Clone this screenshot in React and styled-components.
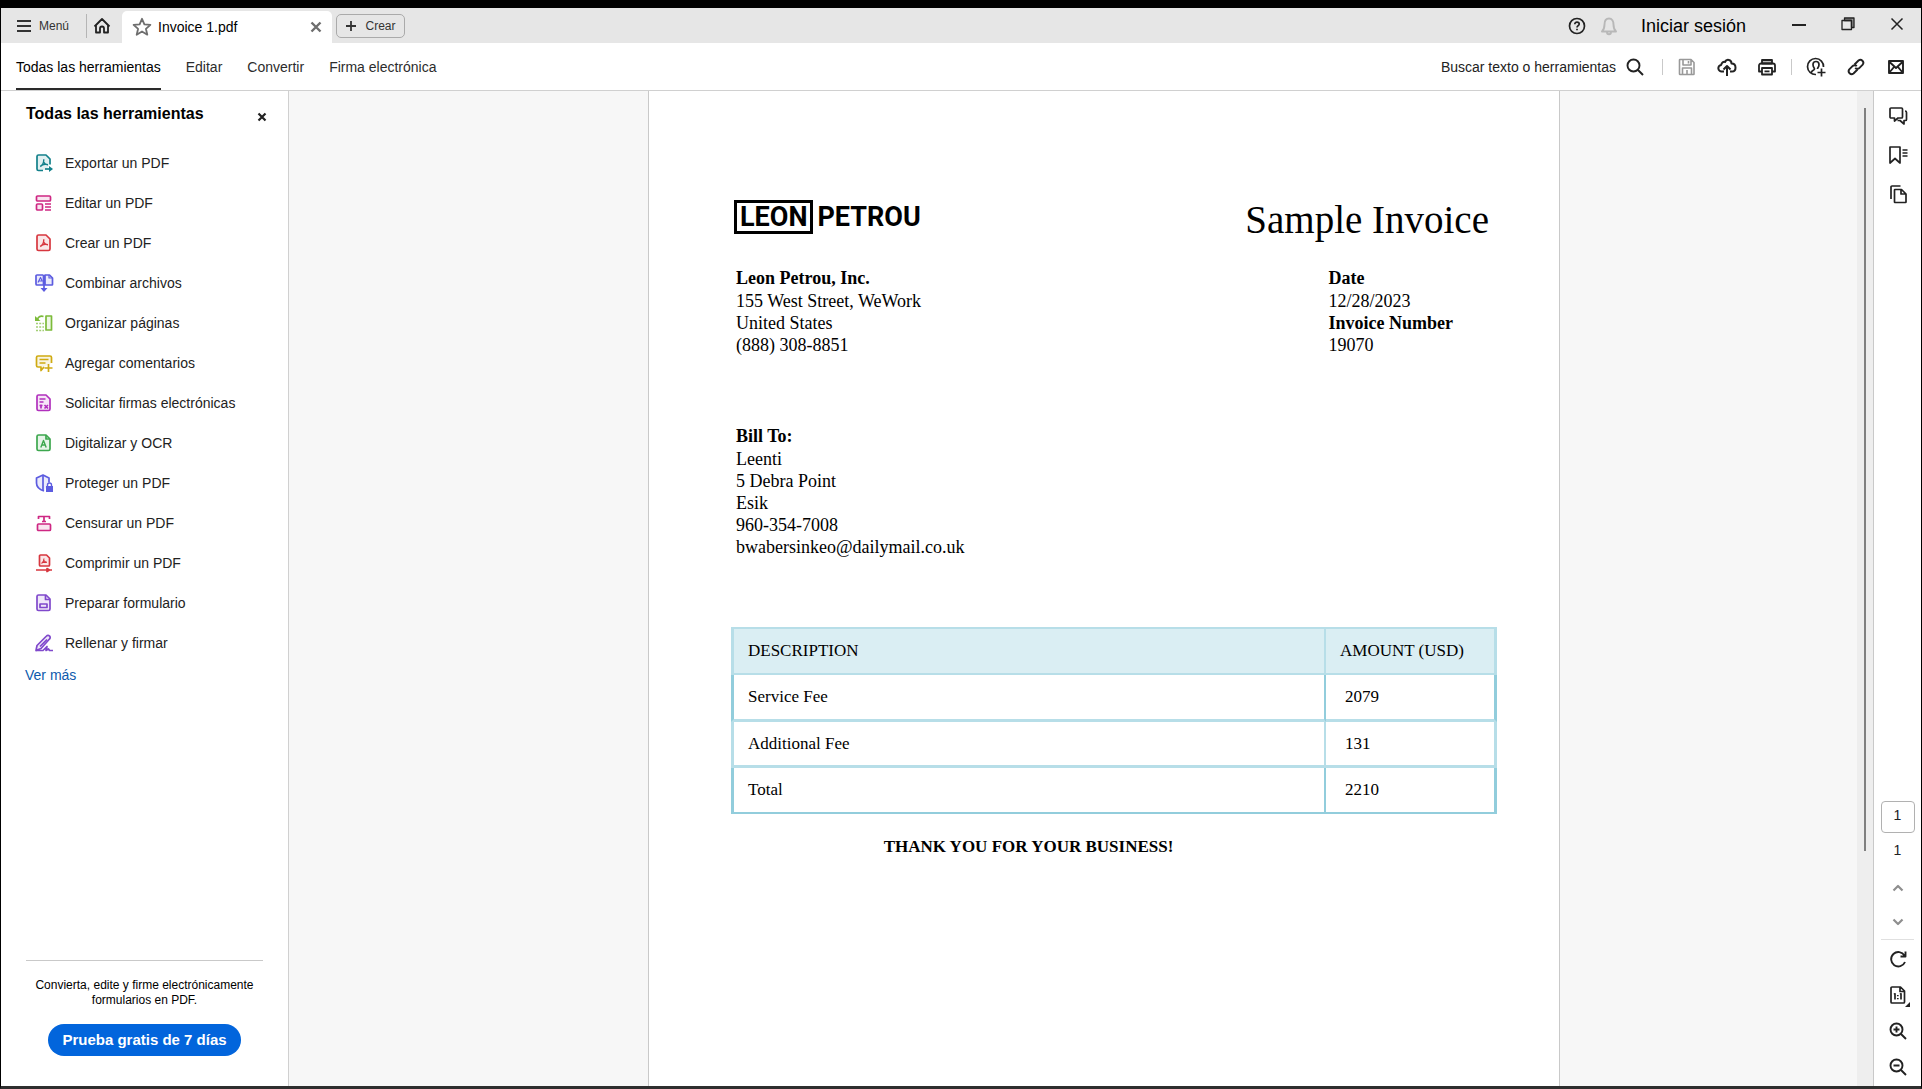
import React from "react";
import styled, { createGlobalStyle } from "styled-components";

const GlobalStyle = createGlobalStyle`
  *, *::before, *::after { box-sizing: border-box; }
  body { margin: 0; background: #000; }
  button, input { font: inherit; color: inherit; }
  h1, h2, h3, p, ul, address { margin: 0; padding: 0; font-style: normal; }
`;

const Shell = styled.div`
  display: grid;
  grid-template-rows: auto auto minmax(0, 1fr);
  height: 100vh;
  border-top: 8px solid #000;
  border-left: 1px solid #000;
  border-right: 1px solid #000;
  border-bottom: 3px solid #2e2e2e;
  background: #fff;
  color: #222;
  font: 14px/20px "Liberation Sans", Arial, sans-serif;
`;

const Svg = styled.svg`
  display: block;
  flex: none;
  fill: none;
  stroke: currentColor;
  stroke-width: ${(p) => p.$weight || 1.6};
  stroke-linejoin: round;
  overflow: visible;
`;

function Icon({ w = 20, h = w, weight, children }) {
  return (
    <Svg width={w} height={h} viewBox={`0 0 ${w} ${h}`} $weight={weight} aria-hidden="true">
      {children}
    </Svg>
  );
}

const Plain = styled.button`
  display: flex;
  align-items: center;
  justify-content: center;
  padding: 0;
  border: 0;
  background: none;
  cursor: pointer;
`;

/* Title bar */
const TitleBar = styled.header`
  display: flex;
  align-items: center;
  height: 35px;
  background: #e6e6e6;
`;

const MenuButton = styled(Plain)`
  gap: 8px;
  margin-left: 16px;
  padding-right: 17px;
  font-size: 12px;
  color: #333;
`;

const HomeButton = styled(Plain)`
  height: 24px;
  width: 36px;
  padding-right: 6px;
  border-left: 1px solid #b5b5b5;
  color: #222;
`;

const Tab = styled.div`
  display: flex;
  align-items: center;
  align-self: flex-end;
  gap: 6px;
  width: 210px;
  height: 32px;
  padding: 0 10px;
  border-radius: 5px 5px 0 0;
  background: #fff;
  color: #000;
`;

const TabName = styled.span`
  flex: 1;
`;

const Muted = styled(Plain)`
  color: #6e6e6e;
`;

const CreateButton = styled(Plain)`
  gap: 10px;
  width: 69px;
  height: 24px;
  margin-left: 4px;
  border: 1px solid #aaa;
  border-radius: 5px;
  font-size: 12px;
  color: #333;
`;

const TitleActions = styled.div`
  display: flex;
  align-items: center;
  gap: 12px;
  margin-left: auto;
`;

const SignIn = styled(Plain)`
  margin-left: 10px;
  font-size: 18px;
  color: #000;
`;

const WindowButtons = styled.div`
  display: flex;
  gap: 29px;
  margin: 0 14px 4px 43px;
`;

/* Toolbar */
const Toolbar = styled.div`
  display: flex;
  align-items: stretch;
  height: 48px;
  padding: 0 15px;
  border-bottom: 1px solid #d0d0d0;
`;

const Nav = styled.nav`
  display: flex;
  gap: 25px;
`;

const NavLink = styled.a`
  display: flex;
  align-items: center;
  padding-top: ${(p) => (p.$active ? "2px" : "0")};
  border-bottom: ${(p) => (p.$active ? "2px solid #2a2a2a" : "0")};
  color: ${(p) => (p.$active ? "#000" : "#2c2c2c")};
  text-decoration: none;
`;

const Tools = styled.div`
  display: flex;
  align-items: center;
  gap: 20px;
  margin-left: auto;
`;

const SearchButton = styled(Plain)`
  gap: 9px;
  margin-right: 3px;
  color: #222;
`;

const Tool = styled(Plain)`
  width: 20px;
  height: 20px;
  color: ${(p) => p.$color || "#222"};
`;

const Separator = styled.span`
  width: 1px;
  height: 16px;
  margin: 0 -6px;
  background: #c9c9c9;
`;

/* Workspace */
const Workspace = styled.div`
  display: grid;
  grid-template-columns: 288px minmax(0, 1fr) 17px 47px;
  min-height: 0;
`;

const Sidebar = styled.aside`
  display: flex;
  flex-direction: column;
  border-right: 1px solid #d0d0d0;
`;

const SidebarHead = styled.div`
  display: flex;
  justify-content: space-between;
  height: 52px;
  padding: 13px 21px 0 25px;
`;

const SidebarTitle = styled.h2`
  font-size: 16px;
  line-height: 20px;
  color: #000;
`;

const SidebarClose = styled(Plain)`
  height: 26px;
`;

const ToolList = styled.ul`
  list-style: none;
`;

const ToolItem = styled(Plain)`
  justify-content: flex-start;
  gap: 12px;
  width: 100%;
  height: 40px;
  padding-left: 34px;
`;

const ToolIcon = styled.span`
  color: ${(p) => p.$color};
`;

const More = styled.a`
  align-self: flex-start;
  margin: 2px 0 0 24px;
  color: #0d5aac;
  text-decoration: none;
`;

const Promo = styled.div`
  display: flex;
  flex-direction: column;
  align-items: center;
  gap: 16px;
  margin: auto 25px 30px;
  padding-top: 17px;
  border-top: 1px solid #c9c9c9;
`;

const PromoText = styled.p`
  font-size: 12px;
  line-height: 15px;
  text-align: center;
  color: #000;
`;

const TrialButton = styled(Plain)`
  width: 193px;
  height: 32px;
  border-radius: 16px;
  background: #0265dc;
  font-size: 15px;
  font-weight: 700;
  color: #fff;
`;

const Viewer = styled.main`
  display: flex;
  background: #f7f7f7;
  overflow: hidden;

  &::before { content: ""; flex: 359; }
  &::after { content: ""; flex: 297; }
`;

const ScrollTrack = styled.div`
  display: flex;
  justify-content: center;
  padding-top: 17px;
  border-right: 1px solid #c9c9c9;
  background: #eee;
`;

const ScrollThumb = styled.div`
  width: 2px;
  height: 76%;
  background: #808080;
`;

const Rail = styled.aside`
  display: flex;
  flex-direction: column;
  align-items: center;
  padding: 15px 0 9px;
`;

const RailGroup = styled.div`
  display: flex;
  flex-direction: column;
  align-items: center;
  gap: ${(p) => p.$gap}px;
`;

const PageBox = styled.input`
  width: 34px;
  height: 32px;
  margin: auto 0 7px;
  padding: 0 0 4px;
  border: 1px solid #b1b1b1;
  border-radius: 4px;
  background: #fff;
  text-align: center;
`;

const PageCount = styled.span`
  margin-bottom: 18px;
`;

const RailRule = styled.hr`
  width: 33px;
  margin: 7px 0 9px;
  border: 0;
  border-top: 1px solid #e0e0e0;
`;

/* Invoice document */
const Paper = styled.article`
  flex: none;
  width: 912px;
  padding: 109px 62px 0 82px;
  border: solid #c9c9c9;
  border-width: 0 1px;
  background: #fff;
  color: #000;
  font: 18px/22px "Liberation Serif", "Times New Roman", serif;
`;

const PaperTop = styled.div`
  display: flex;
  justify-content: space-between;
  height: 67px;
  padding: 0 8px 0 3px;
`;

const Logo = styled.div`
  display: flex;
  align-items: center;
  gap: 4px;
  height: 34px;
  font: 700 27px/28px Roboto, sans-serif;
`;

const LogoBox = styled.span`
  height: 34px;
  padding: 0 3px;
  border: 3px solid #000;
`;

const PaperTitle = styled.h1`
  font-size: 39px;
  line-height: 40px;
  font-weight: 400;
`;

const PaperRow = styled.div`
  display: flex;
  justify-content: space-between;
  padding: 0 44px 0 5px;
`;

const BillTo = styled.address`
  padding: 69px 0 69px 5px;
`;

const Strong = styled.h3`
  margin-bottom: ${(p) => (p.$tight ? "0" : "1px")};
  font-size: 18px;
  line-height: 22px;
`;

const LIGHT = "#b7dee8";
const DARK = "#92cddc";

const Table = styled.table`
  width: 100%;
  border-collapse: separate;
  border-spacing: 0;
  table-layout: fixed;
  font-size: 17px;
  text-align: left;
`;

const Row = styled.tr`
  height: ${(p) => p.$h}px;
  --side: ${(p) => p.$side};
  --rule: ${(p) => p.$rule};
`;

const Head = styled.th`
  width: ${(p) => p.$w || "auto"};
  padding: 0 0 0 ${(p) => p.$pad}px;
  border: solid ${LIGHT};
  border-width: 2px ${(p) => (p.$last ? 3 : 2)}px 2px ${(p) => (p.$last ? 0 : 3)}px;
  background: #daeef3;
  font-weight: 400;
`;

const Cell = styled.td`
  padding: 0 0 0 ${(p) => p.$pad}px;
  border: solid var(--side);
  border-width: 0 ${(p) => (p.$last ? 3 : 2)}px ${(p) => p.$b}px ${(p) => (p.$last ? 0 : 3)}px;
  border-bottom-color: var(--rule);
`;

const Thanks = styled.p`
  padding: 22px 171px 0 0;
  font-size: 17px;
  font-weight: 700;
  text-align: center;
`;

const acrobat = (
  <path d="M5.200 12.500c2-.9 3.600-3.200 3.600-7.200M8.800 8.300c.8 1.800 2.200 2.500 4.200 2.500M7 11.200c1.600-.8 3.200-1 5.500-.6" strokeWidth="1.400" />
);

const tint = { fill: "currentColor", fillOpacity: 0.12 };

const tools = [
  ["Exportar un PDF", "#12808a", <>
    <path {...tint} stroke="none" d="M2 2h12v10l-3 4H2z" />
    <path d="M8 16.500H3.500a1.500 1.500 0 0 1-1.500-1.500V2.500A1.500 1.500 0 0 1 3.500 1H11l4 4v5.500" />
    {acrobat}
    <path d="M10 15h6" />
    <path d="M14 12l4 3-4 3z" fill="currentColor" stroke="none" />
  </>],
  ["Editar un PDF", "#ce2783", <>
    <rect {...tint} x="1.500" y="2" width="14" height="5" rx="1" />
    <rect {...tint} x="1.500" y="10" width="6" height="6" rx="1" />
    <path d="M10 10h6M10 13h6M10 16h6" />
  </>],
  ["Crear un PDF", "#d7373f", <>
    <path {...tint} d="M3.500 1H11l4 4v10a1.500 1.500 0 0 1-1.500 1.500h-10A1.500 1.500 0 0 1 2 15V2.500A1.500 1.500 0 0 1 3.500 1z" />
    {acrobat}
  </>],
  ["Combinar archivos", "#5c5ce0", <>
    <path {...tint} d="M8.500 1H2a1 1 0 0 0-1 1v8a1 1 0 0 0 1 1h15a.5.5 0 0 0 .5-.5V4L14.500 1H10v10M8.500 1v10" />
    <path d="M3 8.500l2.500-5 2 4M3.500 7h4M14 1v3h3" strokeWidth="1.200" />
    <path d="M9 11v4" />
    <path d="M5.500 14h7L9 18z" fill="currentColor" stroke="none" />
  </>],
  ["Organizar páginas", "#7cbb3a", <>
    <rect {...tint} x="11" y="2" width="5.500" height="14" />
    <path d="M2.500 6c0-3 3-4.500 6-3.500" />
    <path d="M0 2v5h5.500z" fill="currentColor" stroke="none" />
    <path d="M1 9.500h8M1 13h8M1 16.500h8" strokeDasharray="2 1.200" opacity=".7" />
  </>],
  ["Agregar comentarios", "#cfaa12", <>
    <path {...tint} d="M9 13l-3 3.500V13H3a1.500 1.500 0 0 1-1.500-1.500v-8A1.500 1.500 0 0 1 3 2h12a1.500 1.500 0 0 1 1.500 1.500V9" />
    <path d="M4.500 5.500h9M4.500 9h6M13.500 10v8M9.500 14h8" />
  </>],
  ["Solicitar firmas electrónicas", "#b130bd", <>
    <path {...tint} d="M3.500 1H11l4 4v10a1.500 1.500 0 0 1-1.500 1.500h-10A1.500 1.500 0 0 1 2 15V2.500A1.500 1.500 0 0 1 3.500 1z" />
    <path d="M4.500 5h6M4.500 8h4M4.500 11.500h3M6 10.500v4M9.500 11l3.500 3.500M13 11l-3.500 3.500" />
  </>],
  ["Digitalizar y OCR", "#3da74e", <>
    <path {...tint} d="M3.500 1H11l4 4v10a1.500 1.500 0 0 1-1.500 1.500h-10A1.500 1.500 0 0 1 2 15V2.500A1.500 1.500 0 0 1 3.500 1z" />
    <path d="M11 1v4h4" />
    <path d="M5.800 13.500l2.700-7 2.700 7M6.800 11h3.500" strokeWidth="1.400" />
  </>],
  ["Proteger un PDF", "#5c5ce0", <>
    <path {...tint} d="M9 17c-5-1.500-7.500-4-7.500-8V4L8 1l6 3v4.500" />
    <path d="M8 1v16" />
    <path d="M12.500 12v-1a2 2 0 0 1 4 0v1" strokeWidth="1.400" />
    <rect x="11" y="12" width="7" height="6" fill="currentColor" stroke="none" />
  </>],
  ["Censurar un PDF", "#ce2783", <>
    <rect {...tint} x="2.500" y="10" width="13" height="6.500" rx="1" />
    <path d="M3.500 5V2.500h11V5M9 2.500v5M7 7.500h4" />
  </>],
  ["Comprimir un PDF", "#d7373f", <>
    <path {...tint} d="M5.500 1h6L14.500 4v7a1 1 0 0 1-1 1h-8a1 1 0 0 1-1-1V2a1 1 0 0 1 1-1z" />
    <path d="M6.500 9.500C8 8.500 9 6.500 9 4.500M9 6.500c.5 1.200 1.500 1.800 3 1.800M7.500 8.500h4" strokeWidth="1.100" />
    <path d="M1 16h16M12 14.500l2.500 1.500-2.500 1.500z" />
  </>],
  ["Preparar formulario", "#8049cc", <>
    <path {...tint} d="M3.500 1H11l4 4v10a1.500 1.500 0 0 1-1.500 1.500h-10A1.500 1.500 0 0 1 2 15V2.500A1.500 1.500 0 0 1 3.500 1z" />
    <path d="M10.500 1v4.500H15M5 10h7v3.500H5z" />
  </>],
  ["Rellenar y firmar", "#8049cc", <>
    <path {...tint} d="M1 16.500l1-5L11.500 2a2 2 0 0 1 3 0 2 2 0 0 1 0 3L6 14.500z" />
    <path d="M1 16.500h7l4-4-1 4 2.500-1.500 1 1.500h3.500M5 12.500l7-7" />
  </>],
];

const rows = [
  ["Service Fee", "2079", 47, 3, DARK, LIGHT],
  ["Additional Fee", "131", 46, 3, LIGHT, LIGHT],
  ["Total", "2210", 46, 2, DARK, DARK],
];

function TopBar() {
  return (
    <TitleBar>
      <MenuButton>
        <Icon w={14} weight={1.800}><path d="M0 2h14M0 7h14M0 12h14" /></Icon>
        Menú
      </MenuButton>
      <HomeButton aria-label="Inicio">
        <Icon w={18} weight={1.800}><path d="M1.500 9.500L9 2l7.500 7.500M3 8.500V15.500h4V11.500a2 2 0 0 1 4 0v4h4V8.500" /></Icon>
      </HomeButton>
      <Tab>
        <Muted aria-label="Destacar">
          <Icon w={20} weight={1.800}><path d="M10 1.800l2.400 5.500 6 .5-4.500 4 1.400 5.900-5.300-3.200-5.300 3.200 1.400-5.900-4.500-4 6-.5z" /></Icon>
        </Muted>
        <TabName>Invoice 1.pdf</TabName>
        <Muted aria-label="Cerrar pestaña">
          <Icon w={12} weight={2.400}><path d="M1.500 1.500l9 9M10.500 1.500l-9 9" /></Icon>
        </Muted>
      </Tab>
      <CreateButton>
        <Icon w={10} weight={1.800}><path d="M5 0v10M0 5h10" /></Icon>
        Crear
      </CreateButton>
      <TitleActions>
        <Tool aria-label="Ayuda">
          <Icon weight={1.700}>
            <circle cx="10" cy="10" r="7.500" />
            <path d="M7.800 8.300c0-3 4.400-2.700 4.400-.2 0 1.500-2.200 1.700-2.200 3.400M10 12.800v1.500" />
          </Icon>
        </Tool>
        <Tool aria-label="Notificaciones" $color="#b8b8b8">
          <Icon weight={1.900}><path d="M3 15.500h14c-2-2-2.500-3.500-2.500-7C14.500 5 13 2.500 10 2.500S5.500 5 5.500 8.500c0 3.500-.5 5-2.500 7zM8 16c0 3 4 3 4 0" /></Icon>
        </Tool>
        <SignIn>Iniciar sesión</SignIn>
      </TitleActions>
      <WindowButtons>
        <Tool aria-label="Minimizar"><Icon weight={2}><path d="M3 11h14" /></Icon></Tool>
        <Tool aria-label="Restaurar">
          <Icon weight={1.300}>
            <path d="M6.500 6.500V4H16v9.500h-2.500v-7z" fill="#999" />
            <path d="M4 6.500h9.500v9H4z" />
          </Icon>
        </Tool>
        <Tool aria-label="Cerrar"><Icon weight={1.500}><path d="M4.500 4.500l11 11M15.500 4.500l-11 11" /></Icon></Tool>
      </WindowButtons>
    </TitleBar>
  );
}

function ToolRow() {
  return (
    <Toolbar>
      <Nav>
        <NavLink href="#todas" $active>Todas las herramientas</NavLink>
        <NavLink href="#editar">Editar</NavLink>
        <NavLink href="#convertir">Convertir</NavLink>
        <NavLink href="#firma">Firma electrónica</NavLink>
      </Nav>
      <Tools>
        <SearchButton>
          Buscar texto o herramientas
          <Icon weight={1.900}><circle cx="8.500" cy="8.500" r="6" /><path d="M13 13l5 5" /></Icon>
        </SearchButton>
        <Separator />
        <Tool aria-label="Guardar" $color="#999">
          <Icon weight={1.600}><path d="M3 2.500h11l3 3v11.500a.5.5 0 0 1-.5.5H3a.5.5 0 0 1-.5-.5V3a.5.5 0 0 1 .5-.5zM6 2.500V8h8V2.500M5.500 17v-6h9v6M11.500 4v2.500M10 13v4" /></Icon>
        </Tool>
        <Tool aria-label="Subir">
          <Icon weight={2}><path d="M7 14.500H5a3 3 0 0 1-.8-6.500C4.500 5.500 6.500 4.500 8 5c1.500-3.500 6.500-2.500 6.500 1.500 2.500 0 4 1.500 4 4.200S17 14.500 15 14.500h-2M10 19v-9M6.500 12.500L10 9l3.500 3.500" /></Icon>
        </Tool>
        <Tool aria-label="Imprimir">
          <Icon weight={1.800}>
            <path d="M5 3h10v3.500H5z" fill="#bbb" />
            <path d="M5 14.500H2V8.500a2 2 0 0 1 2-2h12a2 2 0 0 1 2 2v6h-3M5 11h10v6.500H5zM7.500 14.300h5" />
          </Icon>
        </Tool>
        <Separator />
        <Tool aria-label="Compartir con otros">
          <Icon weight={1.700}>
            <path d="M17.500 10A8 8 0 1 0 10 17.500M5.500 15.500c0-2.500 3-2 3-3.500 0-1.200-1.500-1.500-1.500-4.500 0-4 6-4 6 0 0 3-1.500 3-1.500 4.500M15.500 11.500v8M11.500 15.500h8" />
          </Icon>
        </Tool>
        <Tool aria-label="Copiar enlace">
          <Icon weight={1.900}><path d="M8.500 7.500l4-4a3 3 0 0 1 4.200 4.200l-3.200 3.200a3 3 0 0 1-4.300 0M11.500 12.500l-4 4a3 3 0 0 1-4.200-4.200l3.200-3.200a3 3 0 0 1 4.300 0" /></Icon>
        </Tool>
        <Tool aria-label="Correo">
          <Icon weight={1.900}><path d="M3 4h14v12H3zM3 4.500l7 6.500 7-6.500M3 16l5-6M17 16l-5-6" /></Icon>
        </Tool>
      </Tools>
    </Toolbar>
  );
}

function ToolPanel() {
  return (
    <Sidebar>
      <SidebarHead>
        <SidebarTitle>Todas las herramientas</SidebarTitle>
        <SidebarClose aria-label="Cerrar panel">
          <Icon w={10} weight={2.200}><path d="M1.500 1.500l7 7M8.500 1.500l-7 7" /></Icon>
        </SidebarClose>
      </SidebarHead>
      <ToolList>
        {tools.map(([name, color, art]) => (
          <li key={name}>
            <ToolItem>
              <ToolIcon $color={color}><Icon w={18} weight={1.700}>{art}</Icon></ToolIcon>
              {name}
            </ToolItem>
          </li>
        ))}
      </ToolList>
      <More href="#mas">Ver más</More>
      <Promo>
        <PromoText>Convierta, edite y firme electrónicamente formularios en PDF.</PromoText>
        <TrialButton>Prueba gratis de 7 días</TrialButton>
      </Promo>
    </Sidebar>
  );
}

function Invoice() {
  return (
    <Paper>
      <PaperTop>
        <Logo><LogoBox>LEON</LogoBox>PETROU</Logo>
        <PaperTitle>Sample Invoice</PaperTitle>
      </PaperTop>
      <PaperRow>
        <address>
          <Strong>Leon Petrou, Inc.</Strong>
          <p>155 West Street, WeWork</p>
          <p>United States</p>
          <p>(888) 308-8851</p>
        </address>
        <div>
          <Strong>Date</Strong>
          <p>12/28/2023</p>
          <Strong $tight>Invoice Number</Strong>
          <p>19070</p>
        </div>
      </PaperRow>
      <BillTo>
        <Strong>Bill To:</Strong>
        <p>Leenti</p>
        <p>5 Debra Point</p>
        <p>Esik</p>
        <p>960-354-7008</p>
        <p>bwabersinkeo@dailymail.co.uk</p>
      </BillTo>
      <Table>
        <thead>
          <Row $h={48}>
            <Head $pad={14}>DESCRIPTION</Head>
            <Head $pad={14} $last $w="171px">AMOUNT (USD)</Head>
          </Row>
        </thead>
        <tbody>
          {rows.map(([name, amount, h, b, side, rule]) => (
            <Row key={name} $h={h} $side={side} $rule={rule}>
              <Cell $pad={14} $b={b}>{name}</Cell>
              <Cell $pad={19} $b={b} $last>{amount}</Cell>
            </Row>
          ))}
        </tbody>
      </Table>
      <Thanks>THANK YOU FOR YOUR BUSINESS!</Thanks>
    </Paper>
  );
}

function SideRail() {
  return (
    <Rail>
      <RailGroup $gap={19}>
        <Tool aria-label="Comentarios">
          <Icon weight={1.700}><path d="M3 2h10.500a1 1 0 0 1 1 1v8a1 1 0 0 1-1 1H10l-3.500 3V12H3a1 1 0 0 1-1-1V3a1 1 0 0 1 1-1zM17 5c1 0 1.500.5 1.500 1.500V13.500a1 1 0 0 1-1 1H16V18l-4-3.500H9.500" /></Icon>
        </Tool>
        <Tool aria-label="Marcadores">
          <Icon weight={1.700}><path d="M2 2h10v16l-5-4.500L2 18zM14.500 5h5M14.500 8h5M14.500 11h5" /></Icon>
        </Tool>
        <Tool aria-label="Páginas">
          <Icon weight={1.700}><path d="M7 5.500h6.500L18 10v8a.5.5 0 0 1-.5.5H7a.5.5 0 0 1-.5-.5V6a.5.5 0 0 1 .5-.5zM13 5.500V10h5M3 15V3a1 1 0 0 1 1-1h8.500" /></Icon>
        </Tool>
      </RailGroup>
      <PageBox aria-label="Número de página" defaultValue="1" />
      <PageCount>1</PageCount>
      <RailGroup $gap={14}>
        <Tool aria-label="Página anterior" $color="#8e8e8e"><Icon weight={2.200}><path d="M5.500 12.500L10 8l4.500 4.500" /></Icon></Tool>
        <Tool aria-label="Página siguiente" $color="#8e8e8e"><Icon weight={2.200}><path d="M5.500 7.500L10 12l4.500-4.500" /></Icon></Tool>
      </RailGroup>
      <RailRule />
      <RailGroup $gap={16}>
        <Tool aria-label="Girar">
          <Icon weight={1.900}><path d="M17 13a7.200 7.200 0 1 1-.5-6.500M17.500 2.500V7.500h-5" /></Icon>
        </Tool>
        <Tool aria-label="Tamaño real">
          <Icon weight={1.700}>
            <path d="M4 2h8.500L16.500 6v11a1 1 0 0 1-1 1H4a1 1 0 0 1-1-1V3a1 1 0 0 1 1-1zM12 2v4.500h4.500M6 9.500l1-.7v5.700M12 9.500l1-.7v5.700M9.800 10v1.200M9.800 13v1.200" />
            <path d="M22 17v5h-5z" fill="currentColor" stroke="none" />
          </Icon>
        </Tool>
        <Tool aria-label="Acercar">
          <Icon weight={1.900}><circle cx="8.500" cy="8.500" r="6" /><path d="M13 13l5 5M8.500 5.500v6M5.500 8.500h6" /></Icon>
        </Tool>
        <Tool aria-label="Alejar">
          <Icon weight={1.900}><circle cx="8.500" cy="8.500" r="6" /><path d="M13 13l5 5M5.500 8.500h6" /></Icon>
        </Tool>
      </RailGroup>
    </Rail>
  );
}

export default function App() {
  return (
    <>
      <GlobalStyle />
      <Shell>
        <TopBar />
        <ToolRow />
        <Workspace>
          <ToolPanel />
          <Viewer><Invoice /></Viewer>
          <ScrollTrack><ScrollThumb /></ScrollTrack>
          <SideRail />
        </Workspace>
      </Shell>
    </>
  );
}
